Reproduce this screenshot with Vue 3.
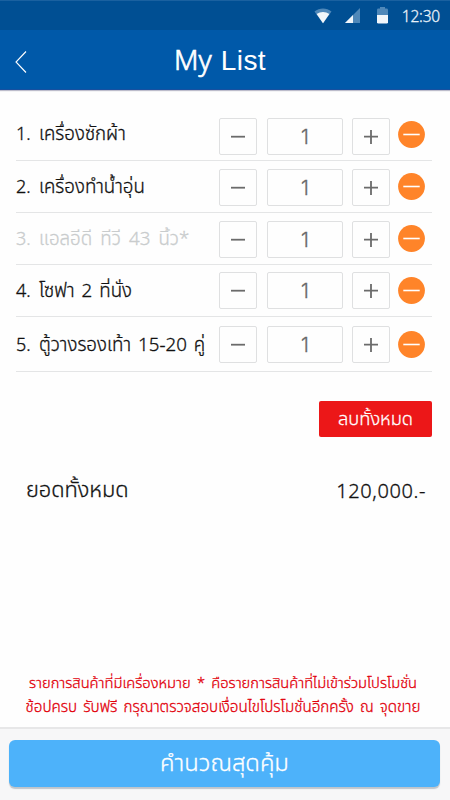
<script setup>
import { ref } from 'vue'

const items = ref([
  { id: 1, name: 'เครื่องซักผ้า', qty: 1, off: false, cls: 'r1' },
  { id: 2, name: 'เครื่องทำน้ำอุ่น', qty: 1, off: false, cls: 'r2' },
  { id: 3, name: 'แอลอีดี ทีวี 43 นิ้ว*', qty: 1, off: true, cls: 'r3' },
  { id: 4, name: 'โซฟา 2 ที่นั่ง', qty: 1, off: false, cls: 'r4' },
  { id: 5, name: 'ตู้วางรองเท้า 15-20 คู่', qty: 1, off: false, cls: 'r5' }
])
</script>

<template>
  <div class="screen">
    <div class="status">
      <svg class="wifi" width="18" height="16" viewBox="0 0 18 16">
        <path d="M0.5 3.6C5.5-0.4 12.5-0.4 17.5 3.6L9 15.3Z" fill="#4f88b9" />
        <path d="M2.6 6C6.5 3.2 11.5 3.2 15.4 6L9 15.3Z" fill="#f1f6fa" />
      </svg>
      <svg class="signal" width="15" height="15" viewBox="0 0 15 15">
        <path d="M15 0V15H0Z" fill="#4f88b9" />
        <path d="M8 7V15H0Z" fill="#f1f6fa" />
      </svg>
      <svg class="battery" width="11" height="17" viewBox="0 0 11 17">
        <path d="M3 0H8V1.6H9.5Q11 1.6 11 3V8H0V3Q0 1.6 1.5 1.6H3Z" fill="#4f88b9" />
        <path d="M0 8H11V15.2Q11 16.6 9.5 16.6H1.5Q0 16.6 0 15.2Z" fill="#f1f6fa" />
      </svg>
      <span class="time">12:30</span>
    </div>
    <header class="bar">
      <svg class="back" width="12" height="22" viewBox="0 0 12 22">
        <path d="M11 0.5L1 11L11 21.5" fill="none" stroke="#fff" stroke-width="1.1" />
      </svg>
      <h1>My <span class="alt">List</span></h1>
    </header>
    <ul class="list">
      <li v-for="item in items" :key="item.id" :class="['row', item.cls, { off: item.off }]">
        <span class="num">{{ item.id }}.</span>
        <span class="name">{{ item.name }}</span>
        <button class="box step">
          <svg width="14" height="14" viewBox="0 0 14 14"><path d="M0 6.7H14" stroke="#6b6b6b" stroke-width="1.8" /></svg>
        </button>
        <span class="box qty">{{ item.qty }}</span>
        <button class="box step">
          <svg width="14" height="14" viewBox="0 0 14 14"><path d="M0 6.7H14M7 0V14" stroke="#6b6b6b" stroke-width="1.8" /></svg>
        </button>
        <button class="remove">
          <svg width="27" height="27" viewBox="0 0 27 27">
            <circle cx="13.5" cy="13.5" r="13.4" fill="#ff8429" />
            <path d="M5.3 13.5H21.7" stroke="#fff" stroke-width="1.6" />
          </svg>
        </button>
      </li>
    </ul>
    <div class="clear"><button class="clear-btn"><span>ลบทั้งหมด</span></button></div>
    <div class="total"><span class="total-label">ยอดทั้งหมด</span><span class="sum">120,000.-</span></div>
    <div class="note">
      <p class="n1">รายการสินค้าที่มีเครื่องหมาย * คือรายการสินค้าที่ไม่เข้าร่วมโปรโมชั่น</p>
      <p class="n2">ช้อปครบ รับฟรี กรุณาตรวจสอบเงื่อนไขโปรโมชั่นอีกครั้ง ณ จุดขาย</p>
    </div>
    <footer class="foot"><button class="calc"><span>คำนวณสุดคุ้ม</span></button></footer>
  </div>
</template>

<style>
body { background: #fff; overflow: hidden; }
</style>

<style scoped>
* { box-sizing: border-box; }
.screen { width: 450px; height: 800px; display: flex; flex-direction: column; background: #fefefe; color: #111; font-family: "Noto Sans", "Noto Sans Thai", "Open Sans", sans-serif; font-weight: 300; -webkit-text-stroke: 0.3px currentColor; white-space: nowrap; overflow: hidden; }
button { font: inherit; border: 0; padding: 0; margin: 0; background: none; display: flex; align-items: center; justify-content: center; }
svg { display: block; flex: none; }
.status { height: 30px; flex: none; background: #004f93; border-top: 1px solid #1a61a0; display: flex; align-items: center; color: #eaf2f9; padding: 0 10px 0 314px; }
.signal { margin-left: 13px; }
.battery { margin-left: 17px; }
.time { margin-left: auto; font-size: 15.5px; line-height: 28px; letter-spacing: -0.2px; }
.bar { height: 60px; flex: none; background: #0059a9; border-bottom: 1px solid #1750a0; display: flex; align-items: center; padding-left: 15px; box-shadow: 0 1px 1px #bcbccb; color: #fff; }
.back { margin-top: 4px; }
h1 { margin: -2px 0 0 147px; font: 300 28px/40px "Noto Sans", sans-serif; -webkit-text-stroke: 0.7px currentColor; }
.alt { font: 400 28px "Liberation Sans", sans-serif; margin-left: 2px; letter-spacing: 0.4px; -webkit-text-stroke: 0; }
.list { list-style: none; margin: 0 18px 0 16px; padding: 0; flex: none; }
.row { display: grid; grid-template-columns: 23px 180px 38px 86px 47px 35px; align-items: end; border-bottom: 1px solid #e4e5e6; height: 52px; padding-bottom: 6px; }
.r1 { height: 71px; padding-bottom: 5px; }
.r4 { padding-bottom: 7px; }
.r5 { height: 55px; padding-bottom: 8px; }
.num, .name { font-size: 18.7px; line-height: 38px; height: 40px; word-spacing: 2.2px; }
.num { font-size: 18px; }
.r1 .num, .r1 .name { height: 41px; }
.r2 .num, .r2 .name, .r3 .num, .r3 .name { height: 39px; }
.r4 .num, .r4 .name { height: 38px; }
.r5 .num, .r5 .name { height: 38px; }
.r3 .name { word-spacing: 3.3px; }
.off .num, .off .name { color: #c9cccd; }
.box { height: 37px; border: 1px solid #dfe0e1; border-radius: 2px; background: #fefefe; display: flex; align-items: center; justify-content: center; }
.qty { margin-left: 10px; width: 76px; font: 300 20px Inter, sans-serif; color: #686868; padding-top: 1px; }
.step:nth-of-type(2) { margin-left: 9px; }
.remove { margin: 0 0 7px 8px; width: 27px; }
.r2 .remove, .r3 .remove { margin-bottom: 6px; }
.r4 .remove { margin-bottom: 5px; }
.r5 .remove { margin-bottom: 5px; }
.clear { display: flex; justify-content: flex-end; margin: 29px 18px 0 0; flex: none; }
.clear-btn { width: 113px; height: 36px; background: #ec1718; border-radius: 2px; color: #fff; font-size: 18.3px; }
.total { display: flex; justify-content: space-between; align-items: center; height: 40px; margin: 33px 24px 0 26px; flex: none; font-size: 21.8px; }
.sum { font-size: 20px; letter-spacing: 0.6px; }
.note { margin-top: auto; flex: none; color: #e2000b; text-align: center; line-height: 24px; padding-bottom: 9px; padding-right: 4px; }
p { margin: 0; }
.n1 { font-size: 14.7px; word-spacing: 2.5px; }
.n2 { font-size: 15.2px; word-spacing: 2.2px; }
.foot { height: 73px; flex: none; border-top: 2px solid #e7e7e8; background: #f7f7f8; padding: 11px 10px 0 9px; }
.calc { width: 431px; height: 47px; border-radius: 6px; background: #4db2fa; box-shadow: 0 2px 1px #bfc5cb; color: #fff; font-size: 23.8px; }
</style>
